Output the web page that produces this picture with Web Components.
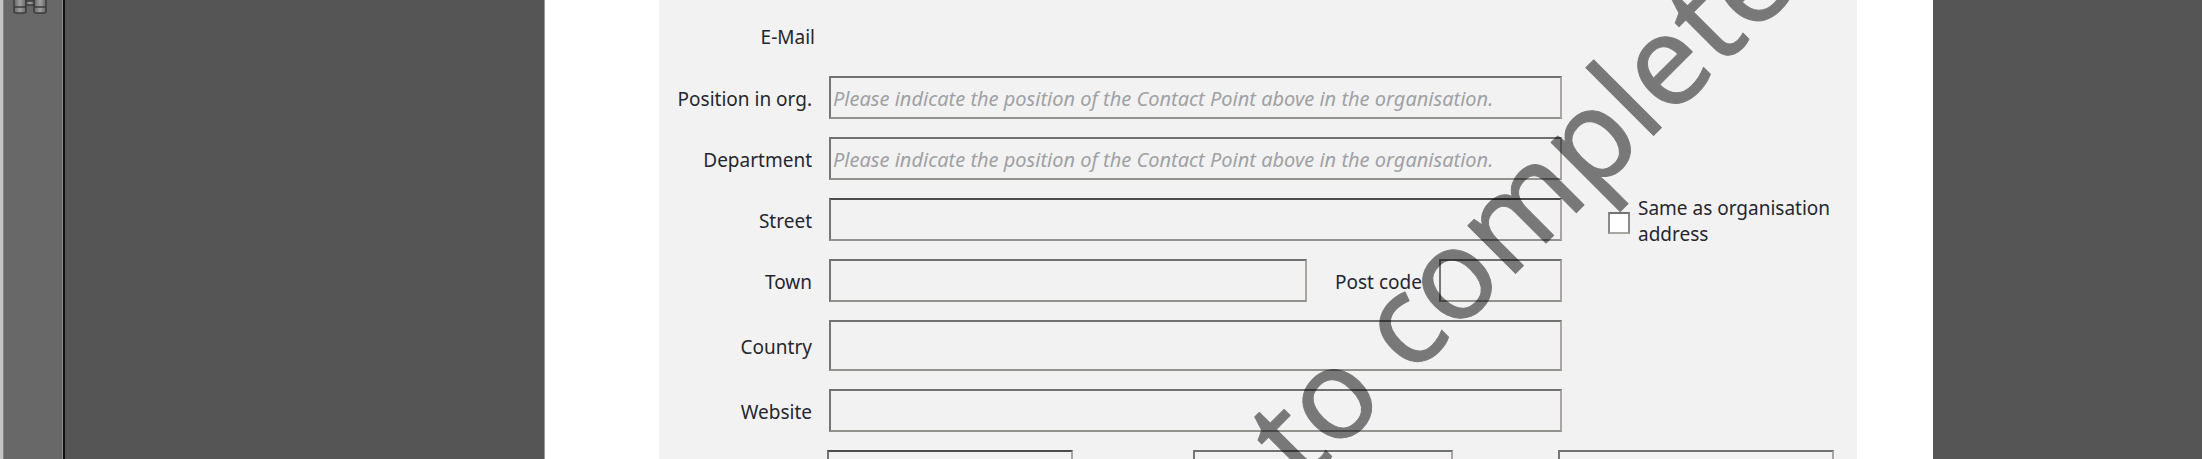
<!DOCTYPE html>
<html lang="en">
<head>
<meta charset="utf-8">
<title>Contact point</title>
<style>
  body {
    margin: 0;
    height: 100vh;
    overflow: hidden;
    background: #555;
    color: #262630;
    font: 19px/26px "Noto Sans", "Open Sans", sans-serif;
  }
</style>
</head>
<body>
<document-viewer>
  <tool-rail slot="rail"></tool-rail>
  <contact-form></contact-form>
</document-viewer>

<script>
class DocumentViewer extends HTMLElement {
  constructor() {
    super();
    this.attachShadow({ mode: "open" });
  }

  static get styles() {
    return /* css */`
      :host {
        display: flex;
        height: 100%;
        overflow: hidden;
      }

      .canvas {
        flex: 1;
        display: grid;
        grid-template-columns: 480fr 1388fr 269fr;
      }

      .sheet {
        grid-column: 2;
        background: #fff;
        padding: 0 76px 0 114px;
        box-shadow: -1px 0 0 #999;
      }
    `;
  }

  connectedCallback() {
    this.shadowRoot.innerHTML = /* html */`
    <style>${DocumentViewer.styles}</style>
    <slot name="rail"></slot>
    <main class="canvas">
      <div class="sheet"><slot></slot></div>
    </main>`;
  }
}

class ToolRail extends HTMLElement {
  constructor() {
    super();
    this.attachShadow({ mode: "open" });
  }

  static get styles() {
    return /* css */`
      :host {
        display: block;
        box-sizing: border-box;
        width: 65px;
        background: #686868;
        border-left: 3px solid #c4c4c4;
        border-right: 2px solid #111;
        box-shadow: inset 1px 0 0 #848484, inset -1px 0 0 #888;
      }

      button {
        display: block;
        margin: 0 0 0 8px;
        padding: 0;
        border: 0;
        background: none;
      }

      svg {
        display: block;
      }
    `;
  }

  connectedCallback() {
    this.shadowRoot.innerHTML = /* html */`
    <style>${ToolRail.styles}</style>
    <button type="button" aria-label="Search">
      <svg width="38" height="15" viewBox="0 0 38 15">
        <defs>
          <linearGradient id="tube">
            <stop offset="0" stop-color="#666"/>
            <stop offset=".5" stop-color="#a0a0a0"/>
            <stop offset="1" stop-color="#666"/>
          </linearGradient>
        </defs>
        <g fill="url(#tube)" stroke="#3c3c3c" stroke-width="1.5">
          <path d="M3 -2V11Q3 13 5 13H13Q15 13 15 11V-2Z"/>
          <path d="M23 -2V11Q23 13 25 13H33Q35 13 35 11V-2Z"/>
          <path d="M15 1H23V5H15Z"/>
          <path d="M3 7H15M23 7H35" fill="none"/>
        </g>
      </svg>
    </button>`;
  }
}

class TextField extends HTMLElement {
  constructor() {
    super();
    this.attachShadow({ mode: "open" });
  }

  static get styles() {
    return /* css */`
      :host {
        display: flex;
        align-items: center;
        gap: 17px;
        min-width: 0;
        height: var(--field-height, 43px);
      }

      label {
        flex: none;
        width: var(--label-width, 153px);
        padding-top: 2px;
        text-align: right;
        white-space: nowrap;
      }

      input {
        flex: 1;
        min-width: 0;
        height: 100%;
        box-sizing: border-box;
        margin: 0;
        padding: 2px 2px 0;
        border: 2px solid;
        border-color: var(--edge, #707173) #aaa6a2 #94928f #747678;
        border-radius: 0;
        background: transparent;
        color: inherit;
        font: inherit;
        font-size: 20px;
      }

      input::placeholder {
        color: #9fa1a5;
        font-style: italic;
        opacity: 1;
      }
    `;
  }

  connectedCallback() {
    const label = this.getAttribute("label");
    const name = this.getAttribute("name");
    const hint = this.getAttribute("placeholder") || "";
    this.shadowRoot.innerHTML = /* html */`
    <style>${TextField.styles}</style>
    ${label ? `<label for="box">${label}</label>` : ""}
    <input id="box" type="text" name="${name}" placeholder="${hint}" ${label ? "" : `aria-label="${name}"`}>`;
  }
}

class CheckField extends HTMLElement {
  constructor() {
    super();
    this.attachShadow({ mode: "open" });
  }

  static get styles() {
    return /* css */`
      :host {
        display: flex;
        align-items: center;
        gap: 8px;
      }

      input {
        appearance: none;
        flex: none;
        width: 22px;
        height: 22px;
        margin: 4px 0 0;
        border: 2px solid;
        border-color: #747474 #8c8a88 #aaa6a2 #8c8a88;
        background: #fff;
      }

      input:checked {
        background: #555;
      }
    `;
  }

  connectedCallback() {
    this.shadowRoot.innerHTML = /* html */`
    <style>${CheckField.styles}</style>
    <input id="tick" type="checkbox">
    <label for="tick"><slot></slot></label>`;
  }
}

class WaterMark extends HTMLElement {
  constructor() {
    super();
    this.attachShadow({ mode: "open" });
  }

  static get styles() {
    return /* css */`
      :host {
        position: absolute;
        inset: 0;
        overflow: hidden;
        pointer-events: none;
      }

      svg {
        display: block;
        width: 100%;
        height: 100%;
        overflow: visible;
      }

      text {
        font-size: 126px;
        fill: #000;
        stroke: #000;
        stroke-width: 1px;
        stroke-linejoin: round;
        opacity: .5;
      }
    `;
  }

  connectedCallback() {
    this.shadowRoot.innerHTML = /* html */`
    <style>${WaterMark.styles}</style>
    <svg><text transform="translate(643 487) rotate(-45)">${this.getAttribute("text")}</text></svg>`;
  }
}

class ContactForm extends HTMLElement {
  constructor() {
    super();
    this.attachShadow({ mode: "open" });
  }

  static get styles() {
    return /* css */`
      :host {
        display: block;
        position: relative;
        background: #f2f2f2;
      }

      form {
        display: grid;
        grid-template-columns: 903fr 295fr;
        row-gap: 18px;
        padding-top: 15px;
      }

      form > * {
        grid-column: 1;
      }

      .static {
        height: 43px;
        display: flex;
        align-items: center;
      }

      .static span {
        width: 156px;
        text-align: right;
      }

      .strong {
        --edge: #4c4c4e;
      }

      .tall {
        --field-height: 51px;
      }

      .pair {
        display: flex;
        gap: 28px;
      }

      .pair text-field:first-child {
        flex: 1;
      }

      .pair text-field:last-child {
        --label-width: auto;
        width: 227px;
      }

      check-field {
        grid-column: 2;
        grid-row: 3 / span 3;
        align-self: start;
        margin: 58px 20px 0 46px;
      }

      .phones {
        grid-column: 1 / -1;
        display: flex;
        padding: 0 23px 0 168px;
      }

      .phones text-field:nth-child(1) {
        flex: 246;
        margin-right: 120px;
      }

      .phones text-field:nth-child(2) {
        flex: 260;
        margin-right: 105px;
      }

      .phones text-field:nth-child(3) {
        flex: 276;
      }
    `;
  }

  connectedCallback() {
    const hint = "Please indicate the position of the Contact Point above in the organisation.";
    this.shadowRoot.innerHTML = /* html */`
    <style>${ContactForm.styles}</style>
    <form>
      <div class="static"><span>E-Mail</span></div>
      <text-field label="Position in org." name="position" placeholder="${hint}"></text-field>
      <text-field label="Department" name="department" placeholder="${hint}"></text-field>
      <text-field class="strong" label="Street" name="street"></text-field>
      <check-field>Same as organisation address</check-field>
      <div class="pair">
        <text-field label="Town" name="town"></text-field>
        <text-field label="Post code" name="postcode"></text-field>
      </div>
      <text-field class="tall" label="Country" name="country"></text-field>
      <text-field label="Website" name="website"></text-field>
      <div class="phones">
        <text-field class="strong" name="phone"></text-field>
        <text-field name="mobile"></text-field>
        <text-field name="fax"></text-field>
      </div>
    </form>
    <water-mark text="to complete"></water-mark>`;
  }
}

customElements.define("document-viewer", DocumentViewer);
customElements.define("tool-rail", ToolRail);
customElements.define("text-field", TextField);
customElements.define("check-field", CheckField);
customElements.define("water-mark", WaterMark);
customElements.define("contact-form", ContactForm);
</script>
</body>
</html>
